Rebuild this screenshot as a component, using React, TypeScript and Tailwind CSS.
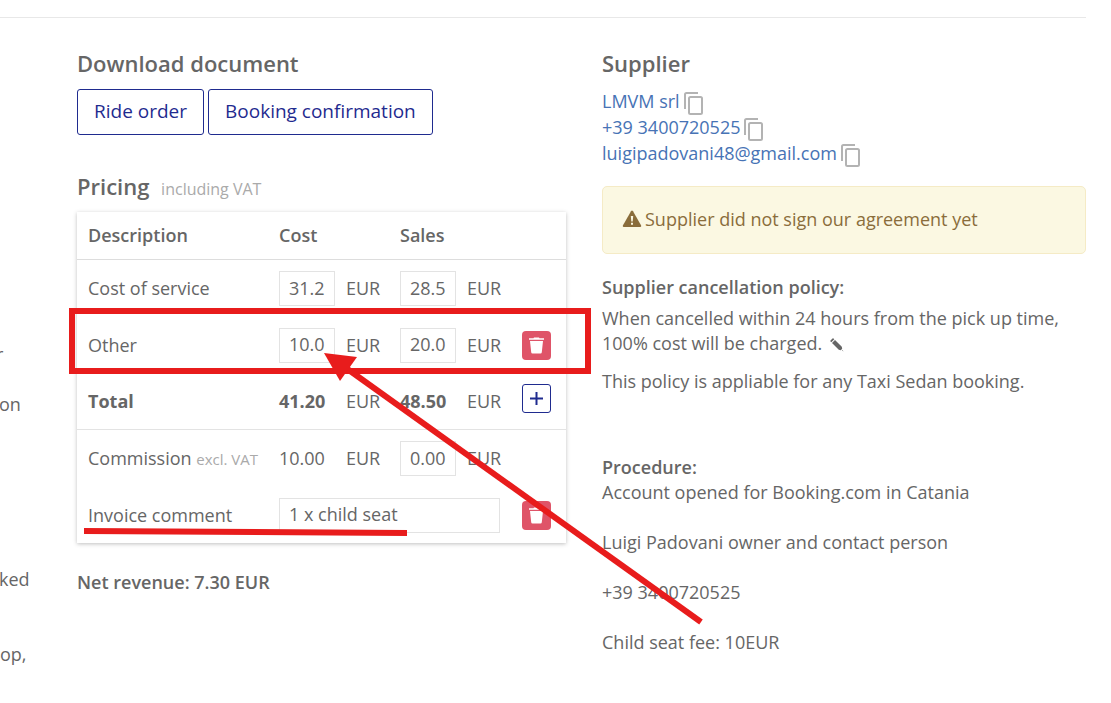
import type { ReactNode } from 'react';

function CopyIcon() {
  return (
    <svg viewBox="0 0 20 24" className="h-6 w-5" fill="none" stroke="#b3b3b3" strokeWidth="2" aria-hidden="true">
      <path d="M1 17V2.5Q1 1 2.500 1H14" />
      <rect x="5" y="5" width="13" height="17" rx="1.500" />
    </svg>
  );
}

function TrashIcon() {
  return (
    <svg viewBox="0 0 15 17" className="h-[17px] w-[15px]" fill="#fff" aria-hidden="true">
      <path d="M0 1.300h4.500L5 .5h5l.5.800H15v1.500H0z" />
      <path d="M1 4h13l-1.200 11.300q-.1 1.200-1.300 1.200h-8q-1.200 0-1.300-1.200z" />
    </svg>
  );
}

function WarningIcon() {
  return (
    <svg viewBox="0 0 20 18" className="h-[18px] w-5 shrink-0" aria-hidden="true">
      <path fill="#8a6d3b" d="M9 1.200q1-1.400 2 0l8 14q.7 1.600-.8 1.800H1.800q-1.500-.2-.8-1.800z" />
      <path fill="#fbf8e2" d="M8.800 6h2.400l-.5 5.500H9.300zM9 12.700h2v2H9z" />
    </svg>
  );
}

function PencilIcon() {
  return (
    <svg viewBox="0 0 14 14" className="h-3.5 w-3.5" fill="#666" aria-hidden="true">
      <path d="M.5 2.500 2.500.5q.5-.4 1 0l.8.800L1.300 4.300l-.8-.8q-.4-.5 0-1zM2 5l3-3 6.800 6.800.4 2-1.400 1.400-2-.4zM12.500 12l1 1.500-1.500-1z" />
    </svg>
  );
}

const field =
  'block h-[35px] w-full border border-[#e3e3e3] bg-white px-[9px] pb-0.5 text-lg text-[#666] outline-none';

function Amount({ label, value }: { label: string; value: string }) {
  return <input aria-label={label} defaultValue={value} className={field} />;
}

function DeleteButton({ label }: { label: string }) {
  return (
    <button aria-label={label} className="flex size-[29px] items-center justify-center rounded-[4px] bg-[#df5468]">
      <TrashIcon />
    </button>
  );
}

function Row({ cells, className }: { cells: ReactNode[]; className: string }) {
  return (
    <tr className={className}>
      {cells.map((cell, i) => (
        <td key={i} className="pl-[11px]">{cell}</td>
      ))}
    </tr>
  );
}

function Contact({ href, children }: { href: string; children: ReactNode }) {
  return (
    <li className="flex items-center gap-1">
      <a href={href} className="leading-[26px] text-[#4773b5]">{children}</a>
      <button aria-label="Copy" className="mt-1 h-[22px]"><CopyIcon /></button>
    </li>
  );
}

function Annotations() {
  return (
    <svg className="pointer-events-none absolute top-0 left-0 h-[703px] w-[1111px]" viewBox="0 0 1111 703" fill="none" stroke="#e81c1c" strokeWidth="6" aria-hidden="true">
      <rect x="72" y="311" width="516" height="60" />
      <path d="M84 531 407 533" />
      <path d="M346 368 701 622" />
      <path d="M324 353 357 357 340 381Z" fill="#e81c1c" stroke="none" />
    </svg>
  );
}

export default function App() {
  return (
    <div className="relative overflow-hidden bg-white pt-[17px] pr-[25px] font-['Open_Sans',sans-serif] text-lg leading-[25px] text-[#666]">
      <main className="grid grid-cols-[41px_489fr_484fr] gap-x-9 border-t border-[#e8e8e8] pt-[31px]">
        <aside className="pt-[293px] whitespace-nowrap">
          <p className="-ml-1">r</p>
          <p className="mt-[25px] -ml-px">on</p>
          <p className="mt-[150px] -ml-px">ked</p>
          <p className="mt-[50px]">op,</p>
        </aside>

        <section>
          <h2 className="text-[22px] leading-7 font-semibold">Download document</h2>
          <div className="mt-3 flex gap-1">
            <button className="h-[46px] rounded-[3px] border border-[#1f2b8f] px-4 pb-0.5 text-[19px] text-[#1f2b8f]">Ride order</button>
            <button className="h-[46px] rounded-[3px] border border-[#1f2b8f] px-4 pb-0.5 text-[19px] text-[#1f2b8f]">Booking confirmation</button>
          </div>

          <h2 className="mt-[37px] text-[22px] leading-7 font-semibold">
            Pricing <small className="ml-1.5 text-base font-normal text-[#aaa]">including VAT</small>
          </h2>
          <table className="mt-[11px] w-full table-fixed border-separate border-spacing-0 text-left shadow-[0_1px_4px_rgba(0,0,0,0.25)]">
            <colgroup>
              <col />
              <col className="w-[67px]" />
              <col className="w-[54px]" />
              <col className="w-[67px]" />
              <col className="w-[55px]" />
              <col className="w-[55px]" />
            </colgroup>
            <thead>
              <tr className="h-12 [&>th]:border-b [&>th]:border-[#ddd] [&>th]:pl-[11px] [&>th]:font-semibold">
                <th>Description</th>
                <th colSpan={2}>Cost</th>
                <th colSpan={3}>Sales</th>
              </tr>
            </thead>
            <tbody>
              <Row className="h-[57px]" cells={['Cost of service', <Amount label="Service cost" value="31.2" />, 'EUR', <Amount label="Service sales" value="28.5" />, 'EUR', null]} />
              <Row className="h-14" cells={['Other', <Amount label="Other cost" value="10.0" />, 'EUR', <Amount label="Other sales" value="20.0" />, 'EUR', <DeleteButton label="Delete other" />]} />
              <Row
                className="h-[57px] [&>td]:border-b [&>td]:border-[#e3e3e3]"
                cells={[
                  <b className="font-bold">Total</b>,
                  <b className="font-bold">41.20</b>,
                  'EUR',
                  <b className="font-bold">48.50</b>,
                  'EUR',
                  <button aria-label="Add" className="mb-[5px] flex size-[29px] items-center justify-center rounded-[3px] border border-[#1f2b8f]">
                    <svg viewBox="0 0 13 13" className="size-[13px]" fill="none" stroke="#1f2b8f" strokeWidth="2" aria-hidden="true"><path d="M6.500 0v13M0 6.500h13" /></svg>
                  </button>,
                ]}
              />
              <Row className="h-[57px]" cells={[<>Commission <small className="text-[15px] text-[#aaa]">excl. VAT</small></>, '10.00', 'EUR', <Amount label="Commission sales" value="0.00" />, 'EUR', null]} />
              <tr className="h-14">
                <td className="pl-[11px]"><label htmlFor="comment">Invoice comment</label></td>
                <td colSpan={4} className="pr-[11px] pl-[11px]"><input id="comment" defaultValue="1 x child seat" className={field} /></td>
                <td className="pl-[11px]"><DeleteButton label="Delete comment" /></td>
              </tr>
            </tbody>
          </table>
          <p className="mt-[27px] font-semibold">Net revenue: 7.30 EUR</p>
        </section>

        <section>
          <h2 className="text-[22px] leading-7 font-semibold">Supplier</h2>
          <ul className="mt-[11px]">
            <Contact href="#supplier">LMVM srl</Contact>
            <Contact href="tel:+393400720525">+39 3400720525</Contact>
            <Contact href="mailto:luigipadovani48@gmail.com">luigipadovani48@gmail.com</Contact>
          </ul>
          <div role="alert" className="mt-5 flex h-[68px] items-center gap-[3px] rounded-[5px] border border-[#f5ebc6] bg-[#fbf8e2] px-[19px] pb-0.5 text-[#8a6d3b]">
            <WarningIcon />
            Supplier did not sign our agreement yet
          </div>
          <h3 className="mt-[21px] font-semibold">Supplier cancellation policy:</h3>
          <p className="mt-1.5">
            When cancelled within 24 hours from the pick up time, 100% cost will be charged.
            <button aria-label="Edit policy" className="ml-2 inline-block align-middle"><PencilIcon /></button>
          </p>
          <p className="mt-[13px]">This policy is appliable for any Taxi Sedan booking.</p>
          <h3 className="mt-[61px] font-semibold">Procedure:</h3>
          <p>Account opened for Booking.com in Catania</p>
          <p className="mt-[25px]">Luigi Padovani owner and contact person</p>
          <p className="mt-[25px]">+39 3400720525</p>
          <p className="mt-[25px]">Child seat fee: 10EUR</p>
        </section>
      </main>
      <Annotations />
    </div>
  );
}
